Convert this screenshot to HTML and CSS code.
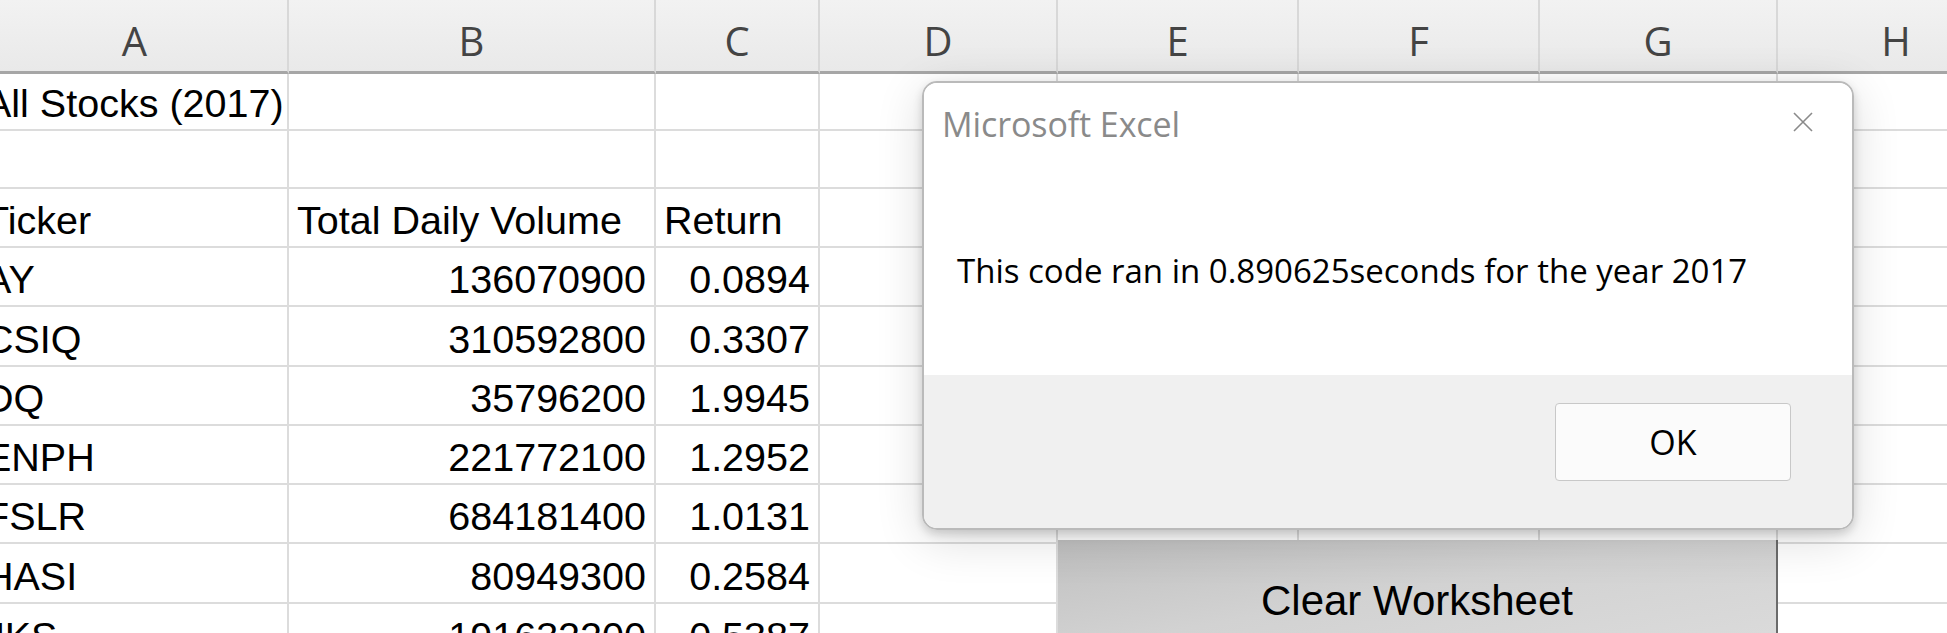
FILE: index.html
```html
<!DOCTYPE html>
<html>
<head>
<meta charset="utf-8">
<link rel="stylesheet" href="styles.css">
</head>
<body>
<div class="sheet">
  <div class="hc">A</div><div class="hc">B</div><div class="hc">C</div><div class="hc">D</div><div class="hc">E</div><div class="hc">F</div><div class="hc">G</div><div class="hc">H</div>

  <div class="c first">All Stocks (2017)</div><div class="c"></div><div class="c"></div><div class="c"></div><div class="c"></div><div class="c"></div><div class="c"></div><div class="c"></div>

  <div class="c first"></div><div class="c"></div><div class="c"></div><div class="c"></div><div class="c"></div><div class="c"></div><div class="c"></div><div class="c"></div>

  <div class="c first">Ticker</div><div class="c">Total Daily Volume</div><div class="c">Return</div><div class="c"></div><div class="c"></div><div class="c"></div><div class="c"></div><div class="c"></div>

  <div class="c first">AY</div><div class="c num">136070900</div><div class="c num">0.0894</div><div class="c"></div><div class="c"></div><div class="c"></div><div class="c"></div><div class="c"></div>

  <div class="c first">CSIQ</div><div class="c num">310592800</div><div class="c num">0.3307</div><div class="c"></div><div class="c"></div><div class="c"></div><div class="c"></div><div class="c"></div>

  <div class="c first">DQ</div><div class="c num">35796200</div><div class="c num">1.9945</div><div class="c"></div><div class="c"></div><div class="c"></div><div class="c"></div><div class="c"></div>

  <div class="c first">ENPH</div><div class="c num">221772100</div><div class="c num">1.2952</div><div class="c"></div><div class="c"></div><div class="c"></div><div class="c"></div><div class="c"></div>

  <div class="c first">FSLR</div><div class="c num">684181400</div><div class="c num">1.0131</div><div class="c"></div><div class="c"></div><div class="c"></div><div class="c"></div><div class="c"></div>

  <div class="c first">HASI</div><div class="c num">80949300</div><div class="c num">0.2584</div><div class="c"></div><div class="c"></div><div class="c"></div><div class="c"></div><div class="c"></div>

  <div class="c first">JKS</div><div class="c num">191632200</div><div class="c num">0.5387</div><div class="c"></div><div class="c"></div><div class="c"></div><div class="c"></div><div class="c"></div>
</div>

<div class="form-btn"><span>Clear Worksheet</span></div>

<div class="dialog">
  <div class="dlg-body">
    <div class="dlg-title">Microsoft Excel</div>
    <div class="dlg-msg">This code ran in 0.890625seconds for the year 2017</div>
    <svg class="dlg-close" width="20" height="20" viewBox="0 0 20 20"><path d="M1 1L19 19M19 1L1 19" stroke="#8a8a8a" stroke-width="1.6" fill="none"/></svg>
  </div>
  <div class="dlg-foot">
    <div class="ok-btn">OK</div>
  </div>
</div>
</body>
</html>
```

FILE: styles.css
```css
html, body {
  margin: 0;
  padding: 0;
}
body {
  width: 1947px;
  height: 633px;
  overflow: hidden;
  background: #ffffff;
  position: relative;
}
.sheet {
  display: grid;
  grid-template-columns: 307px 367px 164px 238px 241px 241px 238px 238px;
  grid-template-rows: 74px 57px 58px 59px 59px 60px 59px 59px 59px 60px 60px;
  margin-left: -18px;
  width: 2034px;
}
.hc {
  box-sizing: border-box;
  background: linear-gradient(#f2f2f2, #e9e9e9);
  border-bottom: 3px solid #a6a6a6;
  border-right: 2px solid #d8d8d8;
  font-family: "Open Sans", "Noto Sans", sans-serif;
  font-size: 40px;
  line-height: 40px;
  color: #444444;
  text-align: center;
  padding-top: 21px;
}
.c {
  box-sizing: border-box;
  border-right: 2px solid #dcdcdc;
  border-bottom: 2px solid #dcdcdc;
  font-family: "Liberation Sans", Arial, sans-serif;
  font-size: 39.5px;
  line-height: 40px;
  color: #000;
  white-space: nowrap;
  overflow: hidden;
  display: flex;
  align-items: flex-end;
  padding: 0 8px 6px 8px;
}
.c.first {
  padding-left: 3px;
}
.num {
  justify-content: flex-end;
}
.form-btn {
  position: absolute;
  left: 1058px;
  top: 540px;
  width: 720px;
  height: 120px;
  box-sizing: border-box;
  background: linear-gradient(170deg, #c0c0c0 0%, #d2d2d2 45%, #dcdcdc 100%);
  border-right: 2px solid #6b6b6b;
  font-family: "Liberation Sans", Arial, sans-serif;
  font-size: 42px;
  line-height: 42px;
  color: #000;
  text-align: center;
  padding-top: 40px;
}
.dialog {
  position: absolute;
  left: 922px;
  top: 81px;
  width: 932px;
  height: 449px;
  box-sizing: border-box;
  border: 2px solid #bababa;
  border-radius: 15px;
  overflow: hidden;
  display: flex;
  flex-direction: column;
  box-shadow: 0 4px 10px rgba(0,0,0,0.16), 0 10px 48px rgba(0,0,0,0.14);
  font-family: "Open Sans", "Noto Sans", sans-serif;
}
.dlg-body {
  position: relative;
  background: #ffffff;
  height: 292px;
  flex: 0 0 292px;
}
.dlg-title {
  font-size: 34px;
  line-height: 34px;
  color: #8a8a8a;
  padding: 24px 0 0 18px;
  letter-spacing: -0.1px;
}
.dlg-msg {
  font-size: 33px;
  line-height: 34px;
  color: #000;
  padding: 113px 0 0 33px;
  letter-spacing: 0px;
}
.dlg-close {
  position: absolute;
  right: 39px;
  top: 29px;
}
.dlg-foot {
  flex: 1;
  background: #f0f0f0;
  display: flex;
  justify-content: flex-end;
  align-items: flex-start;
  padding: 28px 61px 0 0;
}
.ok-btn {
  width: 236px;
  height: 78px;
  box-sizing: border-box;
  background: #fbfbfb;
  border: 1px solid #c8c8c8;
  border-radius: 4px;
  font-size: 34px;
  line-height: 76px;
  text-align: center;
  color: #000;
}
```
